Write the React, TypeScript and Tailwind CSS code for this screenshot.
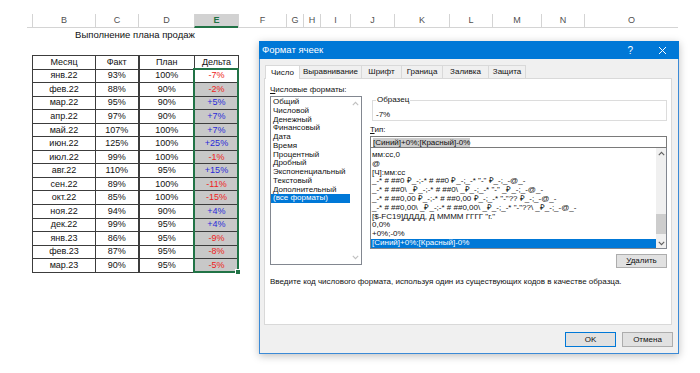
import React from "react";

const cols = [
  { l: "", w: 5 },
  { l: "B", w: 63 },
  { l: "C", w: 43 },
  { l: "D", w: 56 },
  { l: "E", w: 44, active: true },
  { l: "F", w: 48 },
  { l: "G", w: 17 },
  { l: "H", w: 17 },
  { l: "I", w: 30 },
  { l: "J", w: 44 },
  { l: "K", w: 55 },
  { l: "L", w: 43 },
  { l: "M", w: 49 },
  { l: "N", w: 43 },
  { l: "O", w: 94 },
];

const rows: [string, string, string, string][] = [
  ["янв.22", "93%", "100%", "-7%"],
  ["фев.22", "88%", "90%", "-2%"],
  ["мар.22", "95%", "90%", "+5%"],
  ["апр.22", "97%", "90%", "+7%"],
  ["май.22", "107%", "100%", "+7%"],
  ["июн.22", "125%", "100%", "+25%"],
  ["июл.22", "99%", "100%", "-1%"],
  ["авг.22", "110%", "95%", "+15%"],
  ["сен.22", "89%", "100%", "-11%"],
  ["окт.22", "85%", "100%", "-15%"],
  ["ноя.22", "94%", "90%", "+4%"],
  ["дек.22", "99%", "95%", "+4%"],
  ["янв.23", "86%", "95%", "-9%"],
  ["фев.23", "87%", "95%", "-8%"],
  ["мар.23", "90%", "95%", "-5%"],
];

const categories = [
  "Общий",
  "Числовой",
  "Денежный",
  "Финансовый",
  "Дата",
  "Время",
  "Процентный",
  "Дробный",
  "Экспоненциальный",
  "Текстовый",
  "Дополнительный",
  "(все форматы)",
];

const codes = [
  "мм:сс,0",
  "@",
  "[Ч]:мм:сс",
  '_-* # ##0 ₽_-;-* # ##0 ₽_-;_-* "-" ₽_-;_-@_-',
  '_-* # ##0\\ _₽_-;-* # ##0\\ _₽_-;_-* "-" _₽_-;_-@_-',
  '_-* # ##0,00 ₽_-;-* # ##0,00 ₽_-;_-* "-"?? ₽_-;_-@_-',
  '_-* # ##0,00\\ _₽_-;-* # ##0,00\\ _₽_-;_-* "-"??\\ _₽_-;_-@_-',
  '[$-FC19]ДДДД, Д ММММ ГГГГ "г."',
  "0,0%",
  "+0%;-0%",
  "[Синий]+0%;[Красный]-0%",
];

const tabs = [
  { t: "Число", w: 35 },
  { t: "Выравнивание", w: 62 },
  { t: "Шрифт", w: 40 },
  { t: "Граница", w: 41 },
  { t: "Заливка", w: 46 },
  { t: "Защита", w: 37 },
];

function Chevron({ up, color }: { up?: boolean; color: string }) {
  return (
    <svg width="7" height="5" viewBox="0 0 7 5">
      <path
        d={up ? "M0.8 4.2 L3.5 1.3 L6.2 4.2" : "M0.8 0.8 L3.5 3.7 L6.2 0.8"}
        fill="none"
        stroke={color}
        strokeWidth="1.1"
      />
    </svg>
  );
}

function Sheet() {
  return (
    <div className="font-['Liberation_Sans',Arial,sans-serif]">
      <div className="flex pt-[14px] pl-[27px]">
        {cols.map((c, i) => (
          <div
            key={i}
            style={{ width: c.w }}
            className={
              c.active
                ? "h-[14px] border-l border-[#d4d4d4] border-b-2 border-b-[#217346] bg-[#d2d2d2] text-[#217346] font-bold text-[9px] leading-[12px] text-center"
                : "h-[14px] border-l border-[#d4d4d4] border-b border-b-[#d4d4d4] text-[#505050] text-[9px] leading-[13px] text-center first:border-l-0"
            }
          >
            {c.l}
          </div>
        ))}
      </div>
      <div className="ml-[32px] w-[206px] h-[13px] leading-[13px] text-center text-[9.5px] text-[#111] mt-[0px] pt-[0px]">
        Выполнение плана продаж
      </div>
      <div className="relative ml-[32px] mt-[14px] w-[207px]">
        <table className="table-fixed border-collapse text-[9px] text-[#111]">
          <colgroup>
            <col className="w-[63px]" />
            <col className="w-[43px]" />
            <col className="w-[56px]" />
            <col className="w-[44px]" />
          </colgroup>
          <tbody>
            <tr>
              <td className="h-[13.56px] p-0 border border-[#3c3c3c] text-center leading-none">Месяц</td>
              <td className="h-[13.56px] p-0 border border-[#3c3c3c] text-center leading-none">Факт</td>
              <td className="h-[13.56px] p-0 border border-[#3c3c3c] border-l-2 text-center leading-none">План</td>
              <td className="h-[13.56px] p-0 border border-[#3c3c3c] text-center leading-none">Дельта</td>
            </tr>
            {rows.map((r, i) => (
              <tr key={i}>
                <td className="h-[13.56px] p-0 border border-[#3c3c3c] text-center leading-none">{r[0]}</td>
                <td className="h-[13.56px] p-0 border border-[#3c3c3c] text-center leading-none">{r[1]}</td>
                <td className="h-[13.56px] p-0 border border-[#3c3c3c] border-l-2 text-center leading-none">{r[2]}</td>
                <td
                  className={
                    (i === 0 ? "bg-white " : "bg-[#c8c8c8] ") +
                    (r[3].startsWith("-") ? "text-[#ee2222] " : "text-[#2a2ad8] ") +
                    "h-[13.56px] p-0 border border-[#3c3c3c] text-center leading-none"
                  }
                >
                  {r[3]}
                </td>
              </tr>
            ))}
          </tbody>
        </table>
        <div className="absolute left-[161px] top-[12.5px] w-[46px] h-[205px] border-2 border-[#217346] pointer-events-none" />
        <div className="absolute left-[203px] top-[214px] w-[6px] h-[6px] bg-[#217346] border border-white" />
      </div>
    </div>
  );
}

function FormatDialog() {
  return (
    <div className="absolute left-[259px] top-[41px] w-[420px] h-[313px] bg-[#f0f0f0] border border-[#3b8ad6] shadow-[0_2px_8px_rgba(0,0,0,0.25)] font-['Liberation_Sans',Arial,sans-serif] text-[8px] text-[#111] flex flex-col">
      <div className="h-[18px] bg-[#0078d7] text-white flex items-center pl-[3px] -mx-px -mt-px">
        <span className="text-[9.5px]">Формат ячеек</span>
        <span className="ml-auto mr-[25px] text-[10px]">?</span>
        <svg width="9" height="9" viewBox="0 0 9 9" className="mr-[12px]">
          <path d="M1 1 L8 8 M8 1 L1 8" stroke="white" strokeWidth="1" />
        </svg>
      </div>
      <div className="pl-[4px] pt-[5px] flex flex-col">
        <div className="flex pl-[1px] h-[14px] items-end">
          {tabs.map((t, i) => (
            <div
              key={t.t}
              style={{ width: t.w }}
              className={
                i === 0
                  ? "h-[14px] bg-white border border-[#d9d9d9] border-b-0 -mb-px relative z-10 flex items-center justify-center"
                  : "h-[13px] bg-[#f0f0f0] border border-[#d9d9d9] border-l-0 border-b-0 flex items-center justify-center"
              }
            >
              {t.t}
            </div>
          ))}
        </div>
        <div className="w-[408px] h-[247px] bg-white border border-[#d9d9d9] flex flex-col">
          <div className="flex pl-[5px]">
            <div className="w-[92px] flex flex-col">
              <div className="mt-[4px] h-[13px] leading-[13px]">
                <span className="underline">Ч</span>исловые форматы:
              </div>
              <div className="h-[169px] border border-[#828790] flex">
                <div className="flex-1 pt-[1px]">
                  {categories.map((c, i) => (
                    <div
                      key={c}
                      className={
                        (i === categories.length - 1 ? "bg-[#0078d7] text-white " : "") +
                        "h-[8.75px] leading-[8.75px] pl-[2px] whitespace-nowrap"
                      }
                    >
                      {c}
                    </div>
                  ))}
                </div>
                <div className="w-[11px] flex flex-col items-center justify-between py-[4px]">
                  <Chevron up color="#c0c0c0" />
                  <Chevron color="#c0c0c0" />
                </div>
              </div>
            </div>
            <div className="ml-[8px] w-[297px] flex flex-col">
              <div className="mt-[21px] h-[21px] ml-[2px] border border-[#dcdcdc] relative">
                <span className="absolute left-[3px] -top-[6px] bg-white px-[1px] leading-[10px]">Образец</span>
                <div className="pl-[3px] pt-[9px] leading-[9px]">-7%</div>
              </div>
              <div className="mt-[2px] h-[13px] leading-[13px]">
                <span className="underline">Т</span>ип:
              </div>
              <div className="h-[12px] border border-[#7a7a7a] flex items-center pl-[2px]">
                <span className="bg-[#cccccc] leading-[9px]">[Синий]+0%;[Красный]-0%</span>
              </div>
              <div className="h-[101px] border border-[#828790] border-t-0 flex">
                <div className="flex-1 pt-[3px]">
                  {codes.map((c, i) => (
                    <div
                      key={i}
                      className={
                        (i === codes.length - 1 ? "bg-[#0078d7] text-white " : "") +
                        "h-[8.8px] leading-[8.8px] pl-[1px] whitespace-nowrap"
                      }
                    >
                      {c}
                    </div>
                  ))}
                </div>
                <div className="w-[10px] bg-[#f0f0f0] flex flex-col items-center">
                  <div className="h-[10px] flex items-center">
                    <Chevron up color="#606060" />
                  </div>
                  <div className="mt-[56px] w-[10px] h-[20px] bg-[#cdcdcd]" />
                  <div className="mt-auto h-[10px] flex items-center">
                    <Chevron color="#606060" />
                  </div>
                </div>
              </div>
              <div className="mt-[5px] self-end w-[51px] h-[14px] bg-[#e1e1e1] border border-[#adadad] flex items-center justify-center">
                <span>
                  <span className="underline">У</span>далить
                </span>
              </div>
            </div>
          </div>
          <div className="pl-[5px] mt-[9px] leading-[10px] whitespace-nowrap">
            Введите код числового формата, используя один из существующих кодов в качестве образца.
          </div>
        </div>
      </div>
      <div className="flex justify-end gap-[6px] pr-[5px] mt-[7px]">
        <div className="w-[51px] h-[15px] bg-[#e1e1e1] border border-[#0078d7] flex items-center justify-center">OK</div>
        <div className="w-[51px] h-[15px] bg-[#e1e1e1] border border-[#adadad] flex items-center justify-center">Отмена</div>
      </div>
    </div>
  );
}

export default function App() {
  return (
    <div className="relative w-[700px] h-[373px] overflow-hidden bg-white">
      <Sheet />
      <FormatDialog />
    </div>
  );
}
